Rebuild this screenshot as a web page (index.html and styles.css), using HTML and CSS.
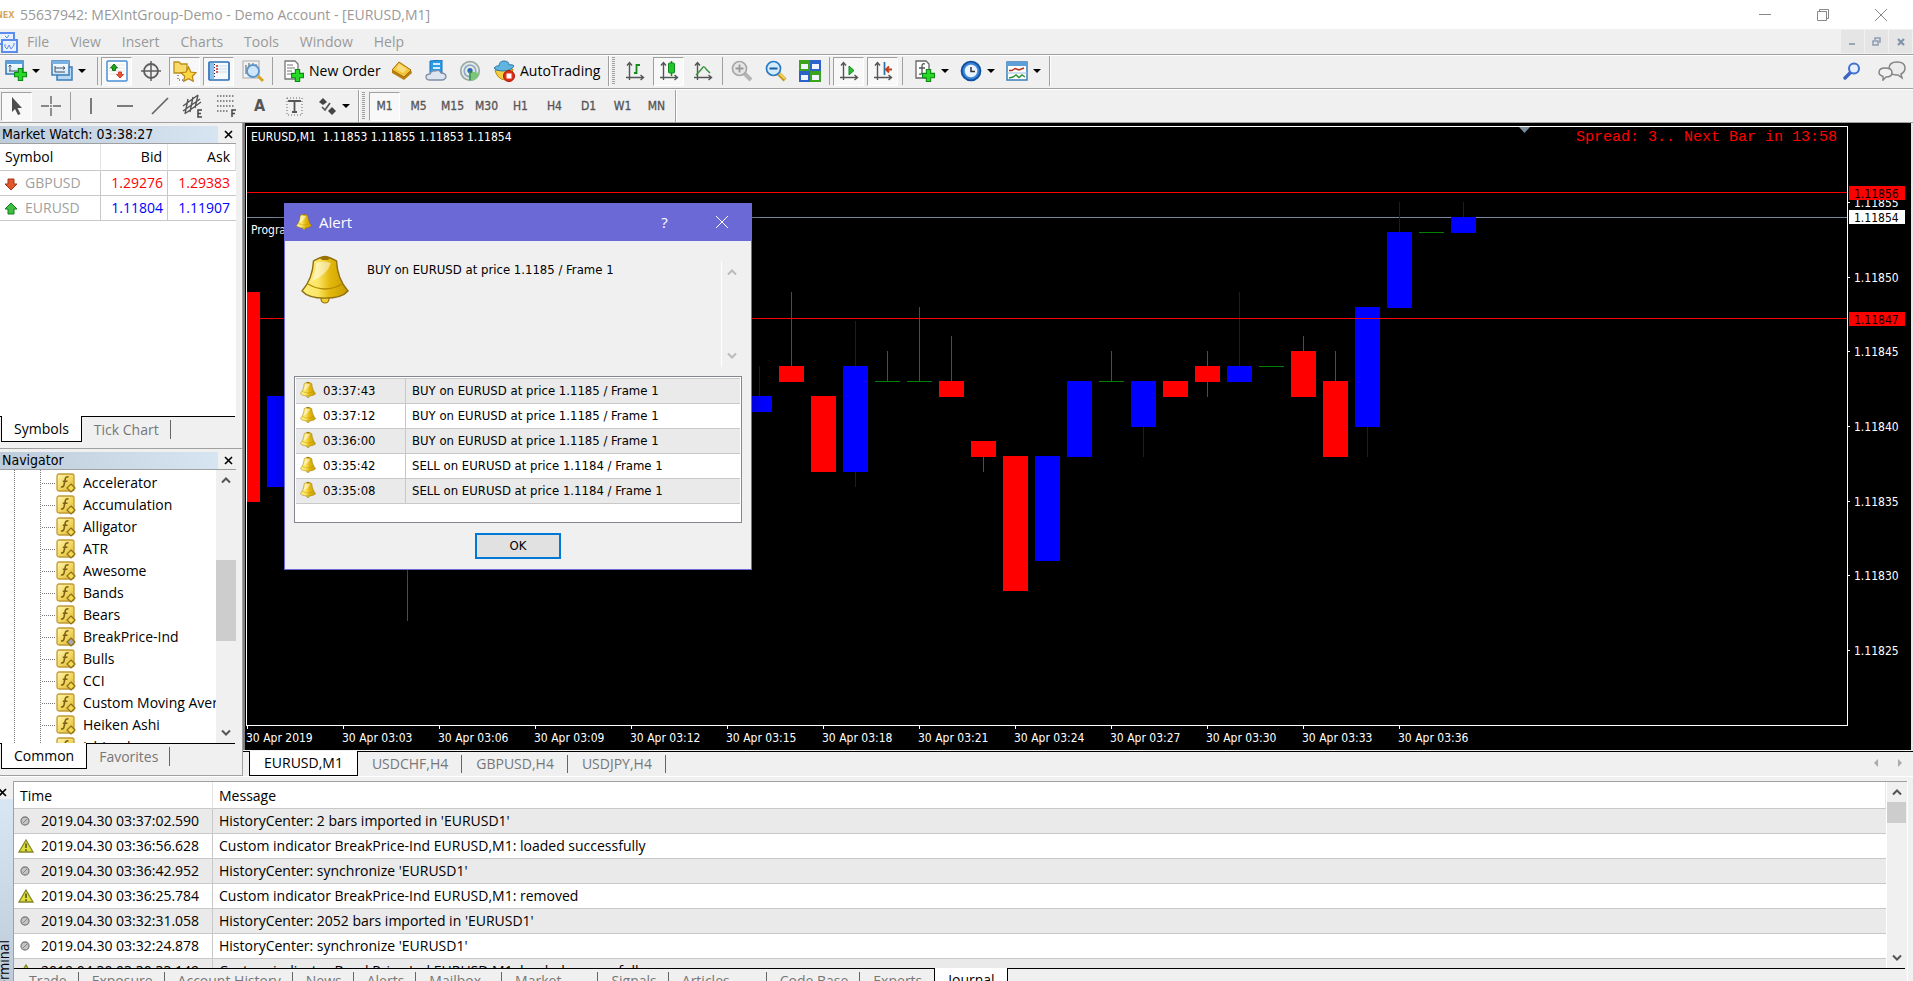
FILE: index.html
```html
<!DOCTYPE html>
<html lang="en">
<head>
<meta charset="utf-8">
<title>55637942: MEXIntGroup-Demo - Demo Account - [EURUSD,M1]</title>
<link rel="stylesheet" href="styles.css">
</head>
<body>
<svg class="defs" aria-hidden="true">
  <defs>
    <linearGradient id="gold" x1="0" y1="0" x2="1" y2="0">
      <stop offset="0" stop-color="#fff07a"/><stop offset=".35" stop-color="#fbe566"/><stop offset=".6" stop-color="#e3b90c"/><stop offset="1" stop-color="#c89b00"/>
    </linearGradient>
    <linearGradient id="fxfill" x1="0" y1="0" x2="1" y2="1">
      <stop offset="0" stop-color="#fff5b0"/><stop offset=".5" stop-color="#f3d964"/><stop offset="1" stop-color="#dcb52f"/>
    </linearGradient>
    <linearGradient id="bluewin" x1="0" y1="0" x2="0" y2="1">
      <stop offset="0" stop-color="#fff"/><stop offset="1" stop-color="#cfe4f7"/>
    </linearGradient>
    <radialGradient id="clockblue"><stop offset="0" stop-color="#cfe9ff"/><stop offset="1" stop-color="#1668c8"/></radialGradient>
  </defs>
  <symbol id="bell" viewBox="0 0 48 50">
    <circle cx="24" cy="44" r="4" fill="#f0cf30" stroke="#8f6f10" stroke-width="1.2"/>
    <path d="M24 1.5C19 2 16 4 12.500 6C12 17 8 28 1 36C9 45.500 39 45.500 47 36C40 28 36 17 35.500 6C32 4 29 2 24 1.500Z" fill="url(#gold)" stroke="#8f6f10" stroke-width="1.4"/>
    <path d="M19 3Q24 -1 29 3L27 5H21Z" fill="#9a7200"/>
    <path d="M7 29Q24 39 41 29" fill="none" stroke="#b48a00" stroke-width="1.3"/>
    <path d="M15 8Q22 5 30 8Q26 20 11 26Q15 16 15 8Z" fill="#fff" opacity=".5"/>
  </symbol>
  <symbol id="fx" viewBox="0 0 20 20">
    <rect x="1" y="1" width="17" height="17" rx="2" fill="url(#fxfill)" stroke="#c09a34" stroke-width="1.3"/>
    <path d="M12.500 4Q9.800 3.200 9.200 6.200L8 12Q7.300 14.500 5 13.800M6.800 8.200H11.500" fill="none" stroke="#7d6018" stroke-width="1.600"/>
    <path class="fx-mark" d="M15 11L19 15L15 19L11 15Z" stroke-width="1.200"/>
  </symbol>
  <symbol id="plus" viewBox="0 0 12 12"><path d="M4 .5H8V4H11.500V8H8V11.500H4V8H.5V4H4Z" fill="#27d827" stroke="#0a8a12"/></symbol>
  <symbol id="axes" viewBox="0 0 22 22"><path d="M5.500 20V3M3 5.500L5.500 2.500L8 5.500M2 17.500H19M16.500 15L19.500 17.500L16.500 20" fill="none" stroke="#555" stroke-width="1.400"/></symbol>
  <symbol id="up" viewBox="0 0 10 8"><path d="M1 6.500L5 2.500L9 6.500" fill="none" stroke="currentColor" stroke-width="2"/></symbol>
  <symbol id="down" viewBox="0 0 10 8"><path d="M1 1.500L5 5.500L9 1.500" fill="none" stroke="currentColor" stroke-width="2"/></symbol>
  <symbol id="x" viewBox="0 0 9 9"><path d="M1 1L8 8M8 1L1 8" stroke="currentColor" stroke-width="1.600"/></symbol>
  <symbol id="warn" viewBox="0 0 16 14"><path d="M8 1L15 13H1Z" fill="#dede38" stroke="#85852a" stroke-width="1.300"/><path d="M8 4.500V9M8 10.200V12" stroke="#555520" stroke-width="1.600"/></symbol>
  <symbol id="info" viewBox="0 0 16 14"><circle cx="7" cy="7" r="4" fill="#c4c4c4" stroke="#808080" stroke-width="1.300"/><path d="M5 9L9 5" stroke="#888"/></symbol>
</svg>

<header class="titlebar">
  <span class="brand">NEX</span>
  <h1>55637942: MEXIntGroup-Demo - Demo Account - [EURUSD,M1]</h1>
  <div class="winbtns">
    <button aria-label="Minimize"><svg width="12" height="12"><path d="M0 5.500H12" stroke="#888"/></svg></button>
    <button aria-label="Restore"><svg width="12" height="12"><path d="M.5 2.500H9.500V11.500H.5ZM2.500 2.500V.5H11.500V9.500H9.500" fill="none" stroke="#888"/></svg></button>
    <button aria-label="Close"><svg width="12" height="12"><path d="M0 0L12 12M12 0L0 12" stroke="#888"/></svg></button>
  </div>
</header>

<nav class="menubar">
  <svg class="appicon" width="18" height="21"><rect x="-3" y="1" width="17" height="11" fill="#e8f1fc" stroke="#5b8def" stroke-width="2"/><rect x="2" y="8" width="15" height="12" fill="#e8f1fc" stroke="#5b8def" stroke-width="2"/><path d="M5 12V15L7 17L9 13L11 17L14 13V11M5 4L7 6L9 3" fill="none" stroke="#5b8def"/></svg>
  <button>File</button><button>View</button><button>Insert</button><button>Charts</button><button>Tools</button><button>Window</button><button>Help</button>
  <div class="mdibtns">
    <button aria-label="Minimize chart"><svg width="7" height="9"><rect y="6" width="6" height="2" fill="#9aa6b4"/></svg></button>
    <button aria-label="Restore chart"><svg width="9" height="9"><path d="M1 4H6V8H1ZM3 3V1H8V5H7" fill="none" stroke="#8d9cae" stroke-width="1.500"/></svg></button>
    <button aria-label="Close chart"><svg width="8" height="8"><path d="M1 1L7 7M7 1L1 7" stroke="#8193a8" stroke-width="2.200"/></svg></button>
  </div>
</nav>

<div class="toolbar">
  <div class="group group--first">
    <button class="drop" aria-label="New chart"><svg width="22" height="22"><rect x="1" y="1" width="17" height="13" fill="url(#bluewin)" stroke="#2f78b8" stroke-width="1.500"/><rect x="1" y="1" width="17" height="3" fill="#5aa0dc"/><path d="M5 5V11M3.500 6.500L5 5L6.500 6.500M4 11H14" stroke="#456" fill="none"/><use href="#plus" x="9" y="8" width="13" height="13"/></svg><i class="caret"></i></button>
    <button class="drop" aria-label="Profiles"><svg width="22" height="22"><rect x="6" y="7" width="15" height="13" fill="#b8d7f2" stroke="#3a7db8" stroke-width="1.500"/><rect x="1" y="1" width="17" height="14" fill="url(#bluewin)" stroke="#3a7db8" stroke-width="1.500"/><rect x="1" y="1" width="17" height="3" fill="#78b1e2"/><path d="M4 6V12M4 8H14M12 6.500L14 8L12 9.500M4 12H14" stroke="#456" fill="none"/></svg><i class="caret"></i></button>
  </div>
  <i class="sep"></i>
  <button class="tool on" aria-label="Market Watch"><svg width="22" height="22"><rect x="1" y="1" width="20" height="20" rx="1" fill="#fff" stroke="#4a90d6" stroke-width="1.500"/><path d="M3 5H19M3 8H19M3 11H19M3 14H19" stroke="#e3e3e3"/><path d="M8 4L11.500 8H9.500V10.500H6.500V8H4.500Z" fill="#1fa51f" stroke="#0a7a12"/><path d="M14 18L10.500 14.500H12.500V12H15.500V14.500H17.500Z" fill="#ee5526" stroke="#c43" /></svg></button>
  <button class="tool" aria-label="Data Window"><svg width="22" height="22"><circle cx="11" cy="11" r="7" fill="none" stroke="#5d5d5d" stroke-width="1.800"/><path d="M11 1V21M1 11H21" stroke="#5d5d5d" stroke-width="1.500"/></svg></button>
  <button class="tool on" aria-label="Navigator"><svg width="24" height="22"><path d="M1 13V2H6L8 4H14V13Z" fill="#f7db6b" stroke="#b98f1b" stroke-width="1.300"/><path d="M5 15V21M6 20H10" stroke="#333" stroke-dasharray="1 2"/><path d="M15.500 7L17.800 12L23 12.700L19.300 16.200L20.300 21.300L15.500 18.800L10.700 21.300L11.700 16.200L8 12.700L13.200 12Z" fill="#fbd83f" stroke="#b98416" stroke-width="1.200"/></svg></button>
  <button class="tool on" aria-label="Terminal"><svg width="22" height="22"><rect x="1" y="2" width="20" height="18" rx="1" fill="#f5faff" stroke="#2d6fb5" stroke-width="1.700"/><rect x="2" y="3" width="4" height="16" fill="#8fc0ec"/><path d="M9 6H19M9 9H19M9 12H19" stroke="#cfdce8"/><path d="M8 6H10M8 9H10M8 12H10" stroke="#d22" stroke-width="1.300"/><path d="M6.500 4V18" stroke="#123" stroke-dasharray="1 2"/></svg></button>
  <button class="tool" aria-label="Strategy Tester"><svg width="24" height="24"><rect x="2" y="2" width="16" height="17" fill="#f2f2f2" stroke="#aaa"/><path d="M5 15V6M8 12V4M12 8V4M15 10V5" stroke="#888" stroke-width="1.500"/><circle cx="12" cy="12" r="6" fill="#cfe6f9" stroke="#5b95cd" stroke-width="1.800"/><path d="M17 17L22 22" stroke="#d9a520" stroke-width="3"/></svg></button>
  <i class="sep"></i>
  <button class="textbtn textbtn--order"><svg width="22" height="24"><path d="M2 2H12L15 5V20H2Z" fill="#fff" stroke="#777" stroke-width="1.300"/><path d="M4 6H10M4 9H12M4 12H9M4 15H9" stroke="#777"/><use href="#plus" x="8" y="10" width="13" height="13"/></svg>New Order</button>
  <button class="tool" aria-label="MetaEditor"><svg width="22" height="22"><path d="M8 2L20 10L21 13L13 20L1 13V10Z" fill="#b97f10"/><path d="M8 2L20 10L13 17L1 10Z" fill="#f3c53c" stroke="#a8700c"/><path d="M8 4L16 9L12 13L5 9Z" fill="#f9dd7c"/></svg></button>
  <button class="tool" aria-label="VPS"><svg width="22" height="22"><path d="M5 1L17 0V13H5Z" fill="#2e9be8" stroke="#1273bd"/><path d="M8 3H15V5H8ZM8 7H15V9H8Z" fill="#d5eeff"/><path d="M5 20Q1 20 1 17Q1 14 5 14Q6 10 10.500 11Q14 9 16 13Q21 13 21 17Q20 20 17 20Z" fill="#dce5f0" stroke="#7e8ea5" stroke-width="1.300"/></svg></button>
  <button class="tool" aria-label="Signals"><svg width="22" height="22"><circle cx="11" cy="11" r="9.300" fill="#e4ebe4" stroke="#9aaaa2" stroke-width="1.700"/><circle cx="11" cy="11" r="5.800" fill="none" stroke="#8fa9c8" stroke-width="1.700"/><path d="M11 11L20 13A9 9 0 0 1 12 21Z" fill="#7cc67c"/><circle cx="11" cy="10.500" r="2.600" fill="#2d66b8"/><path d="M11 11V20" stroke="#3b9648" stroke-width="1.700"/></svg></button>
  <button class="textbtn textbtn--auto"><svg width="22" height="22"><path d="M2 10Q4 19 12 20Q19 18 20 9Z" fill="#f5ce3f" stroke="#b8860b"/><path d="M1 8Q4 5 6 6Q6 1 11 1Q16 1 16 5Q20 4 21 6Q18 11 9 11Q3 11 1 8Z" fill="#5fb4e0" stroke="#2a7caa"/><circle cx="16" cy="16" r="5.500" fill="#e02d1b" stroke="#a81508"/><rect x="13.500" y="13.500" width="5" height="5" fill="#fff"/></svg>AutoTrading</button>
  <i class="end"></i><i class="grip"></i>
  <button class="tool" aria-label="Bar Chart"><svg width="22" height="22"><use href="#axes"/><path d="M12.500 4V14M12.500 5H16M10 13H12.500" stroke="#148a1c" stroke-width="1.800"/></svg></button>
  <button class="tool on" aria-label="Candlesticks"><svg width="22" height="22"><use href="#axes"/><path d="M13.500 1V16" stroke="#148a1c" stroke-width="1.500"/><rect x="10.500" y="3" width="6" height="10" rx="1" fill="#22c52c" stroke="#148a1c"/></svg></button>
  <button class="tool" aria-label="Line Chart"><svg width="22" height="22"><use href="#axes"/><path d="M4 15Q8 11 10 8.500Q12 5 14 9L18 13" fill="none" stroke="#3a9440" stroke-width="1.500"/></svg></button>
  <i class="sep"></i>
  <button class="tool" aria-label="Zoom In"><svg width="22" height="22"><path d="M13 13L20 20" stroke="#b5b5b5" stroke-width="4"/><circle cx="8.500" cy="8.500" r="7" fill="#e6e6e6" stroke="#a8a8a8" stroke-width="1.700"/><path d="M4.500 8.500H12.500M8.500 4.500V12.500" stroke="#999" stroke-width="1.800"/></svg></button>
  <button class="tool" aria-label="Zoom Out"><svg width="22" height="22"><path d="M13 13L20 20" stroke="#c99a20" stroke-width="4"/><path d="M14 13L20 19" stroke="#f7dc66" stroke-width="1.500"/><circle cx="8.500" cy="8.500" r="7" fill="#d3ebfc" stroke="#2a7bc4" stroke-width="1.700"/><path d="M4.500 8.500H12.500" stroke="#1b5c9e" stroke-width="2"/></svg></button>
  <button class="tool" aria-label="Tile Windows"><svg width="22" height="22"><path d="M0 0H11V11H0ZM11 11H22V22H11Z" fill="#3ba41c"/><path d="M11 0H22V11H11ZM0 11H11V22H0Z" fill="#2c62c9"/><path d="M2 4H9V9H2ZM13 4H20V9H13ZM2 15H9V20H2ZM13 15H20V20H13Z" fill="#eef5ff"/></svg></button>
  <i class="sep"></i>
  <button class="tool on" aria-label="Auto Scroll"><svg width="22" height="22"><use href="#axes"/><path d="M11 6L16 10.500L11 15Z" fill="#2bc032" stroke="#138a1c"/></svg></button>
  <button class="tool on" aria-label="Chart Shift"><svg width="22" height="22"><use href="#axes"/><path d="M12.500 2V15" stroke="#2a6ea8" stroke-width="1.700"/><path d="M20 9.500H14M17 6.500L14 9.500L17 12.500" fill="none" stroke="#c43a14" stroke-width="1.800"/></svg></button>
  <i class="sep"></i>
  <div class="group group--menus">
    <button class="drop" aria-label="Indicators"><svg width="22" height="24"><path d="M2 2H12L15 5V19H2Z" fill="#fff" stroke="#666" stroke-width="1.300"/><path d="M11 5Q8 4 8 7V13Q8 16 5 15M5 9H11" stroke="#555" fill="none" stroke-width="1.300"/><use href="#plus" x="8" y="10" width="13" height="13"/></svg><i class="caret"></i></button>
    <button class="drop" aria-label="Periods"><svg width="22" height="22"><circle cx="11" cy="11" r="9.500" fill="url(#clockblue)" stroke="#0e4f9e" stroke-width="1.700"/><circle cx="11" cy="11" r="6.200" fill="#e9f5ff"/><path d="M11 7V11.500H15" fill="none" stroke="#333" stroke-width="1.500"/></svg><i class="caret"></i></button>
    <button class="drop" aria-label="Templates"><svg width="22" height="22"><rect x="1" y="2" width="20" height="18" fill="#fff" stroke="#3a7db8" stroke-width="1.500"/><rect x="1" y="2" width="20" height="4" fill="#5f9fd8"/><path d="M3 10.500H6L9 8.500L13 10L18 8" fill="none" stroke="#b5301c" stroke-width="1.500"/><path d="M1 13H21" stroke="#9cc0e0"/><path d="M3 18L7 17L10 15L13 17.500L16 15L19 17" fill="none" stroke="#2c9436" stroke-width="1.500"/></svg><i class="caret"></i></button>
  </div>
  <i class="end"></i>
  <div class="toolbar-right">
    <button aria-label="Search"><svg width="18" height="18"><path d="M8 10L2 16" stroke="#3a63c4" stroke-width="3.400" stroke-linecap="round"/><circle cx="11" cy="6.500" r="5" fill="#e8effc" stroke="#3f6fd1" stroke-width="2"/></svg></button>
    <button aria-label="Chat"><svg width="28" height="20"><path d="M19 14Q11 14 11 7.500Q11 1 19 1Q27 1 27 7Q27 11 23 13L24 17L20 14Z" fill="#ececec" stroke="#858585" stroke-width="1.500"/><path d="M7 7Q14 7 14 11.500Q14 16 8 16L5 19V15.500Q1 14 1 11.500Q1 7 7 7Z" fill="#f1f1f1" stroke="#858585" stroke-width="1.500"/></svg></button>
  </div>
</div>

<div class="toolbar toolbar--draw">
  <button class="tool on" aria-label="Cursor"><svg width="22" height="22"><path d="M6 2V17L9 14L12 20L14.500 19L11.500 13H16Z" fill="#4d4d4d"/></svg></button>
  <button class="tool" aria-label="Crosshair"><svg width="22" height="22"><path d="M11 1V9M11 13V21M1 11H9M13 11H21M11 10V12" stroke="#666" stroke-width="1.400"/></svg></button>
  <i class="sep"></i>
  <button class="tool" aria-label="Vertical Line"><svg width="22" height="22"><path d="M12 3V19" stroke="#666" stroke-width="1.700"/></svg></button>
  <button class="tool" aria-label="Horizontal Line"><svg width="22" height="22"><path d="M4 11H20" stroke="#666" stroke-width="1.700"/></svg></button>
  <button class="tool" aria-label="Trendline"><svg width="22" height="22"><path d="M5 19L21 3" stroke="#666" stroke-width="1.700"/></svg></button>
  <button class="tool" aria-label="Equidistant Channel"><svg width="22" height="24"><path d="M2 12L17 1M2 17L19 5M5 19L20 8M7 5L4 20M12 3L9 18M17 1L14 14" stroke="#555" stroke-width="1.400"/><path d="M21 16H17V23H21M17 19.500H20" fill="none" stroke="#444" stroke-width="1.500"/></svg></button>
  <button class="tool" aria-label="Fibonacci Retracement"><svg width="22" height="24"><path d="M2 2H20M2 7H20M2 12H20M2 17H14" stroke="#666" stroke-width="1.500" stroke-dasharray="1.500 1.500"/><path d="M17 23V16H21M17 19.500H20" fill="none" stroke="#444" stroke-width="1.500"/></svg></button>
  <button class="tool glyph" aria-label="Text">A</button>
  <button class="tool" aria-label="Text Label"><svg width="22" height="22"><rect x="4" y="3" width="15" height="17" fill="none" stroke="#666" stroke-dasharray="1 2"/><path d="M6 7V6H17V7M11.500 6V17M9 17H14" stroke="#555" stroke-width="1.800" fill="none"/></svg></button>
  <button class="drop" aria-label="Arrows"><svg width="22" height="22"><path d="M8 3L12 7L8 10L4 7ZM17 12L21 16L17 20L13 16Z" fill="#444"/><path d="M7 12L10 15L15 8" fill="none" stroke="#555" stroke-width="1.700"/></svg><i class="caret"></i></button>
  <i class="end"></i><i class="grip"></i>
  <button class="tool tf on">M1</button><button class="tool tf">M5</button><button class="tool tf">M15</button><button class="tool tf">M30</button><button class="tool tf">H1</button><button class="tool tf">H4</button><button class="tool tf">D1</button><button class="tool tf">W1</button><button class="tool tf">MN</button>
  <i class="end"></i>
</div>

<main class="workspace">
  <aside class="side">
    <section class="panel panel--watch">
      <header class="panel-head"><h2>Market Watch: 03:38:27</h2><button aria-label="Close Market Watch"><svg width="9" height="9"><use href="#x"/></svg></button></header>
      <div class="panel-body">
        <table class="quotes">
          <colgroup><col class="c-symbol"><col class="c-bid"><col></colgroup>
          <thead><tr><th>Symbol</th><th>Bid</th><th>Ask</th></tr></thead>
          <tbody>
            <tr class="fall"><td><svg width="14" height="14"><path d="M7 13L1 7H4V2H10V7H13Z" fill="#e0572a" stroke="#a33415"/></svg>GBPUSD</td><td>1.29276</td><td>1.29383</td></tr>
            <tr class="rise"><td><svg width="14" height="14"><path d="M7 1L13 7H10V12H4V7H1Z" fill="#3fbf3f" stroke="#157a20"/></svg>EURUSD</td><td>1.11804</td><td>1.11907</td></tr>
          </tbody>
        </table>
      </div>
      <div class="tabs"><button class="tab active">Symbols</button><button class="tab">Tick Chart</button></div>
    </section>
    <section class="panel panel--nav">
      <header class="panel-head"><h2>Navigator</h2><button aria-label="Close Navigator"><svg width="9" height="9"><use href="#x"/></svg></button></header>
      <div class="panel-body tree-box">
        <ul class="tree">
          <li><svg><use href="#fx"/></svg>Accelerator</li>
          <li><svg><use href="#fx"/></svg>Accumulation</li>
          <li><svg><use href="#fx"/></svg>Alligator</li>
          <li><svg><use href="#fx"/></svg>ATR</li>
          <li><svg><use href="#fx"/></svg>Awesome</li>
          <li><svg><use href="#fx"/></svg>Bands</li>
          <li><svg><use href="#fx"/></svg>Bears</li>
          <li class="custom"><svg><use href="#fx"/></svg>BreakPrice-Ind</li>
          <li><svg><use href="#fx"/></svg>Bulls</li>
          <li><svg><use href="#fx"/></svg>CCI</li>
          <li><svg><use href="#fx"/></svg>Custom Moving Average</li>
          <li><svg><use href="#fx"/></svg>Heiken Ashi</li>
          <li><svg><use href="#fx"/></svg>Ichimoku</li>
        </ul>
        <div class="scroll scroll--nav"><button aria-label="Scroll up"><svg width="10" height="8"><use href="#up"/></svg></button><i class="track-a"></i><i class="thumb"></i><i class="track-b"></i><button aria-label="Scroll down"><svg width="10" height="8"><use href="#down"/></svg></button></div>
      </div>
      <div class="tabs"><button class="tab active">Common</button><button class="tab">Favorites</button></div>
    </section>
  </aside>

  <section class="charts">
    <div class="chart">
      <div class="plot">
        <svg class="plot-svg" id="plot" width="100%" height="100%"></svg>
        <p class="ohlc">EURUSD,M1&nbsp; 1.11853 1.11855 1.11853 1.11854</p>
        <p class="note">Program</p>
        <p class="spread">Spread: 3.. Next Bar in 13:58</p>
      </div>
      <svg class="prices" id="prices" width="63" height="100%"></svg>
      <ol class="times"><li>30 Apr 2019</li><li>30 Apr 03:03</li><li>30 Apr 03:06</li><li>30 Apr 03:09</li><li>30 Apr 03:12</li><li>30 Apr 03:15</li><li>30 Apr 03:18</li><li>30 Apr 03:21</li><li>30 Apr 03:24</li><li>30 Apr 03:27</li><li>30 Apr 03:30</li><li>30 Apr 03:33</li><li>30 Apr 03:36</li></ol>
    </div>
    <div class="tabs tabs--charts"><button class="tab active">EURUSD,M1</button><button class="tab">USDCHF,H4</button><button class="tab">GBPUSD,H4</button><button class="tab">USDJPY,H4</button>
      <span class="tabnav"><svg width="6" height="10"><path d="M5 1V9L1 5Z" fill="#aaa"/></svg><svg width="6" height="10"><path d="M1 1V9L5 5Z" fill="#aaa"/></svg></span>
    </div>
  </section>
</main>

<section class="terminal">
  <div class="spine"><button aria-label="Close Terminal"><svg width="9" height="9"><use href="#x"/></svg></button><h2><span>Terminal</span></h2></div>
  <div class="terminal-main">
    <div class="journal-box">
      <div class="journal-clip">
      <table class="journal">
        <colgroup><col class="c-time"><col></colgroup>
        <thead><tr><th>Time</th><th>Message</th></tr></thead>
        <tbody>
          <tr><td><svg><use href="#info"/></svg>2019.04.30 03:37:02.590</td><td>HistoryCenter: 2 bars imported in 'EURUSD1'</td></tr>
          <tr><td><svg><use href="#warn"/></svg>2019.04.30 03:36:56.628</td><td>Custom indicator BreakPrice-Ind EURUSD,M1: loaded successfully</td></tr>
          <tr><td><svg><use href="#info"/></svg>2019.04.30 03:36:42.952</td><td>HistoryCenter: synchronize 'EURUSD1'</td></tr>
          <tr><td><svg><use href="#warn"/></svg>2019.04.30 03:36:25.784</td><td>Custom indicator BreakPrice-Ind EURUSD,M1: removed</td></tr>
          <tr><td><svg><use href="#info"/></svg>2019.04.30 03:32:31.058</td><td>HistoryCenter: 2052 bars imported in 'EURUSD1'</td></tr>
          <tr><td><svg><use href="#info"/></svg>2019.04.30 03:32:24.878</td><td>HistoryCenter: synchronize 'EURUSD1'</td></tr>
          <tr><td><svg><use href="#warn"/></svg>2019.04.30 03:30:33.149</td><td>Custom indicator BreakPrice-Ind EURUSD,M1: loaded successfully</td></tr>
        </tbody>
      </table>
      </div>
      <div class="scroll scroll--journal"><button aria-label="Scroll up"><svg width="10" height="8"><use href="#up"/></svg></button><i class="thumb"></i><i class="track-b"></i><button aria-label="Scroll down"><svg width="10" height="8"><use href="#down"/></svg></button></div>
    </div>
    <div class="tabs tabs--terminal"><button class="tab">Trade</button><button class="tab">Exposure</button><button class="tab">Account History</button><button class="tab">News</button><button class="tab">Alerts</button><button class="tab tab--count">Mailbox</button><button class="tab tab--wide">Market</button><button class="tab">Signals</button><button class="tab tab--wide">Articles</button><button class="tab">Code Base</button><button class="tab tab--last">Experts</button><button class="tab active">Journal</button></div>
  </div>
</section>

<div class="alert" role="dialog" aria-labelledby="alert-title">
  <header class="alert-head"><svg width="16" height="18"><use href="#bell"/></svg><h2 id="alert-title">Alert</h2>
    <button aria-label="Help">?</button><button aria-label="Close"><svg width="12" height="12"><path d="M0 0L12 12M12 0L0 12" stroke="#fff"/></svg></button></header>
  <div class="alert-body">
    <div class="alert-top">
      <svg width="48" height="50"><use href="#bell"/></svg>
      <p>BUY on EURUSD at price 1.1185 / Frame 1</p>
      <div class="alert-scroll"><svg width="10" height="8"><use href="#up"/></svg><svg width="10" height="8"><use href="#down"/></svg></div>
    </div>
    <div class="alert-list">
      <table>
        <colgroup><col class="c-when"><col></colgroup>
        <tbody>
        <tr><td><svg><use href="#bell"/></svg>03:37:43</td><td>BUY on EURUSD at price 1.1185 / Frame 1</td></tr>
        <tr><td><svg><use href="#bell"/></svg>03:37:12</td><td>BUY on EURUSD at price 1.1185 / Frame 1</td></tr>
        <tr><td><svg><use href="#bell"/></svg>03:36:00</td><td>BUY on EURUSD at price 1.1185 / Frame 1</td></tr>
        <tr><td><svg><use href="#bell"/></svg>03:35:42</td><td>SELL on EURUSD at price 1.1184 / Frame 1</td></tr>
        <tr><td><svg><use href="#bell"/></svg>03:35:08</td><td>SELL on EURUSD at price 1.1184 / Frame 1</td></tr>
        </tbody>
      </table>
    </div>
    <button class="ok">OK</button>
  </div>
</div>
<script src="chart.js"></script>
</body>
</html>
```

FILE: styles.css
```css
:root {
  --ui: "Open Sans", "Noto Sans", sans-serif;
  --small: "DejaVu Sans Condensed", "DejaVu Sans", sans-serif;
  --face: #f0f0f0;
  --line: #a0a0a0;
  --grid: #c8c8c8;
}
* { box-sizing: border-box; }
html, body { height: 100%; }
body {
  margin: 0;
  display: flex;
  flex-direction: column;
  overflow: hidden;
  background: var(--face);
  font: 14px/18px var(--ui);
  color: #000;
}
h1, h2, p, ul, ol { margin: 0; padding: 0; font: inherit; list-style: none; }
button { font: inherit; color: inherit; background: none; border: 0; padding: 0; border-radius: 0; }
svg { display: block; flex: none; }
.defs { position: absolute; width: 0; height: 0; }
table { border-collapse: separate; border-spacing: 0; table-layout: fixed; width: 100%; }
th { font-weight: normal; text-align: left; }
td, th { padding: 0; white-space: nowrap; }
td svg { display: inline-block; vertical-align: middle; }

/* title and menu */
.titlebar { display: flex; align-items: center; height: 29px; background: #fff; color: #999; flex: none; }
.brand { width: 20px; margin-left: -4px; margin-right: 4px; font: bold 9px/12px var(--small); color: #d9a860; }
.winbtns { margin-left: auto; display: flex; padding-right: 3px; }
.winbtns button { width: 58px; display: flex; justify-content: center; }
.menubar { display: flex; align-items: center; height: 27px; flex: none; color: #999; border-bottom: 1px solid #fff; box-shadow: inset 0 -1px var(--line); }
.appicon { margin-right: -1px; }
.menubar > button { padding: 0 10px; margin-right: 1px; }
.mdibtns { margin-left: auto; display: flex; gap: 1px; padding-right: 1px; height: 23px; margin-bottom: 1px; }
.mdibtns button { width: 23px; background: #e5e5e5; display: flex; align-items: center; justify-content: center; }

/* toolbars */
.toolbar { display: flex; align-items: center; height: 34px; flex: none; padding: 0 0 3px 2px; border-bottom: 1px solid #fff; box-shadow: inset 0 -1px var(--line); }
.toolbar--draw { height: 33px; padding: 0 0 1px 1px; border-bottom: 0; }
.group { display: flex; }
.group--first { padding-right: 2px; }
.group--menus { padding-left: 5px; }
.tool { width: 31px; height: 29px; margin-right: 3px; display: flex; align-items: center; justify-content: center; border: 1px solid transparent; flex: none; }
.tool.on { background: #f8f8f8; border-color: var(--line) #fff #fff var(--line); }
.tf { font: 12px/16px var(--small); color: #555; -webkit-text-stroke: 0.3px #555; }
.glyph { font: bold 16px/20px var(--small); color: #555; }
.drop { width: 46px; height: 29px; padding-left: 3px; display: flex; align-items: center; gap: 5px; flex: none; }
.caret { border: 4px solid transparent; border-top-color: #000; border-bottom: 0; }
.sep { width: 1px; height: 28px; background: var(--line); margin: 0 3px 0 1px; flex: none; }
.end { width: 2px; align-self: stretch; background: linear-gradient(90deg, var(--line) 50%, #fff 50%); flex: none; }
.grip { width: 3px; height: 28px; margin: 0 4px 0 2px; background: repeating-linear-gradient(var(--line) 0 1px, transparent 1px 2px); flex: none; }
.textbtn { display: flex; align-items: center; height: 29px; flex: none; }
.textbtn--order { width: 110px; padding-left: 7px; gap: 4px; }
.textbtn--auto { width: 120px; padding-left: 5px; gap: 5px; }
.toolbar-right { margin-left: auto; display: flex; align-items: center; gap: 17px; padding-right: 7px; }

/* workspace */
.workspace { flex: 1; min-height: 0; display: flex; }
.side { width: 243px; flex: none; display: grid; grid-template-columns: minmax(0, 1fr); grid-template-rows: 326px minmax(0, 1fr); border-right: 1px solid var(--line); }
.panel { min-height: 0; display: flex; flex-direction: column; padding: 3px 5px 6px 0; border-bottom: 1px solid var(--line); }
.panel-head { display: flex; height: 17px; align-items: center; font: 14px/17px var(--small); flex: none; }
.panel-head h2 { width: 218px; padding-left: 2px; background: linear-gradient(90deg, #bfcddb, #d7e4f2); }
.panel-head button { padding-left: 6px; }
.panel-body { flex: 1; min-height: 0; background: #fff; border-top: 1px solid var(--line); margin-right: 1px; }
.c-symbol { width: 101px; }
.c-bid { width: 67px; }
.quotes th { height: 27px; border-bottom: 1px solid var(--grid); border-right: 1px solid #e5e5e5; padding: 0 5px; }
.quotes td { height: 25px; border-bottom: 1px solid var(--grid); border-right: 1px solid var(--grid); padding: 0 4px; }
.quotes td:last-child { border-right: 0; padding-right: 6px; }
.quotes td + td, .quotes th + th { text-align: right; }
.quotes td:first-child { color: #a0a0a0; }
.quotes svg { margin-right: 7px; }
.fall { color: #f00; }
.rise { color: #00f; }

.tabs { display: flex; height: 26px; border-top: 1px solid #000; flex: none; margin-right: 2px; color: #777; padding-left: 1px; }
.tab { height: 100%; padding: 0 12px; position: relative; white-space: nowrap; flex: none; }
.tab:not(.active)::after { content: ""; position: absolute; right: 0; top: 3px; bottom: 3px; width: 1px; background: #666; }
.tab.active { color: #000; background: #fff; border: 1px solid #000; border-top: 0; margin-top: -1px; height: calc(100% + 1px); }

.tree-box { display: flex; }
.tree { flex: 1; min-width: 0; overflow: hidden; padding-top: 2px; background: repeating-linear-gradient(#777 0 1px, transparent 1px 2px) 14px 0 / 1px 100% no-repeat, repeating-linear-gradient(#777 0 1px, transparent 1px 2px) 40px 0 / 1px 100% no-repeat; }
.tree li { height: 22px; display: flex; align-items: center; padding-left: 42px; white-space: nowrap; }
.tree li::before { content: ""; width: 13px; height: 1px; margin-right: 1px; flex: none; background: repeating-linear-gradient(90deg, #777 0 1px, transparent 1px 2px); }
.tree svg { width: 20px; height: 20px; margin-right: 7px; --mark: #f5d94f; }
.fx-mark { fill: var(--mark); stroke: #8c6f1c; }
.tree .custom svg { --mark: #aaa; }
.scroll { width: 20px; background: var(--face); color: #555; display: flex; flex-direction: column; flex: none; }
.scroll button { height: 20px; display: flex; align-items: center; justify-content: center; flex: none; }
.thumb { background: #cdcdcd; }
.track-a { flex: 70; }
.scroll--nav .thumb { flex: 81; }
.scroll--nav .track-b { flex: 82; }
.scroll--journal .thumb { height: 21px; width: 19px; }
.scroll--journal .track-b { flex: 1; }

/* charts */
.charts { flex: 1; min-width: 0; display: flex; flex-direction: column; }
.chart { flex: 1; min-height: 0; display: grid; grid-template-columns: minmax(0, 1fr) 63px; grid-template-rows: minmax(0, 1fr) 24px; background: #000; color: #fff; border-left: 2px solid #808080; border-right: 2px solid #e8e8e8; padding: 3px 0 0 1px; font: 12px/14px var(--small); }
.plot { position: relative; border: 1px solid #fff; overflow: hidden; min-height: 0; }
.plot-svg { position: absolute; inset: 0; }
.ohlc { position: absolute; left: 4px; top: 3px; }
.note { position: absolute; left: 4px; top: 96px; }
.spread { position: absolute; right: 10px; top: 2px; color: #f00; font: 15px/18px "Liberation Mono", monospace; }
.prices { overflow: visible; min-height: 0; font: 12px var(--small); }
.times { grid-column: 1 / -1; display: flex; }
.times li { width: 96px; flex: none; padding-top: 5px; position: relative; }
.times li::before { content: ""; position: absolute; left: 1px; top: 0; width: 1px; height: 3px; background: #fff; }
.tabs--charts { height: 25px; margin: 1px 0 0; padding-left: 6px; flex: none; }
.tabs--charts .tab { padding: 0 14px; }
.tabnav { margin: 0 10px 0 auto; display: flex; gap: 18px; padding-top: 6px; }

/* terminal */
.terminal { height: 205px; flex: none; display: flex; padding: 4px 5px 0 0; border-top: 1px solid #fff; }
.spine { width: 13px; flex: none; overflow: hidden; display: flex; flex-direction: column; }
.spine button { height: 18px; flex: none; padding: 4px 0 0; margin-left: -2px; }
.spine h2 { flex: 1; display: flex; align-items: flex-start; padding-top: 141px; background: linear-gradient(#d9e6f4, #bccad8); font: 14px/17px var(--small); }
.spine span { writing-mode: vertical-rl; transform: rotate(180deg); margin-left: -4px; flex: none; }
.terminal-main { flex: 1; min-width: 0; border-left: 1px solid var(--line); border-right: 1px solid #fff; display: flex; flex-direction: column; }
.journal-box { flex: 1; min-height: 0; display: flex; border-top: 1px solid var(--line); background: #fff; }
.journal-clip { flex: 1; min-width: 0; overflow: hidden; margin-right: 1px; }
.c-time { width: 199px; }
.journal th { height: 27px; border-bottom: 1px solid var(--grid); border-right: 1px solid #e5e5e5; padding: 1px 6px 0; }
.journal td { height: 25px; border-bottom: 1px solid var(--grid); padding: 0 6px; }
.journal td:first-child { border-right: 1px solid var(--grid); padding-left: 4px; }
.journal tr:nth-child(odd) td { background: #eaeaea; }
.journal td svg { width: 16px; height: 14px; margin-right: 7px; margin-top: -3px; }
.tabs--terminal { height: 13px; margin-right: 2px; padding-left: 2px; }
.tabs--terminal .tab { height: 24px; padding: 0 12px 0 13px; }
.tabs--terminal .tab--count { padding-right: 21px; }
.tabs--terminal .tab--wide { padding-right: 37px; }
.tabs--terminal .tab--last::after { display: none; }

/* alert window */
.alert { position: absolute; left: 284px; top: 203px; width: 468px; border: 1px solid #6b69d6; background: var(--face); font: 13px/16px var(--small); box-shadow: 0 2px 14px rgba(0, 0, 0, .3); }
.alert-head { display: flex; align-items: center; height: 37px; padding: 0 1px 2px 11px; background: #6b69d6; color: #fff; font: 15px/20px var(--ui); }
.alert-head h2 { margin: 0 auto 0 7px; }
.alert-head button { width: 57px; display: flex; justify-content: center; }
.alert-body { display: flex; flex-direction: column; padding: 14px 9px 10px; }
.alert-top { display: flex; height: 121px; padding-left: 7px; }
.alert-top p { margin: 7px auto 0 18px; }
.alert-scroll { border-left: 1px solid #fff; margin: 6px 0 9px; width: 21px; padding: 7px 5px; color: #bbb; display: flex; flex-direction: column; justify-content: space-between; }
.alert-list { height: 147px; background: #fff; border: 1px solid #828790; padding: 1px; }
.c-when { width: 110px; }
.alert-list td { height: 25px; border-bottom: 1px solid var(--grid); padding: 0 6px; }
.alert-list tr:first-child td { height: 26px; border-top: 1px solid var(--grid); }
.alert-list td:first-child { border-right: 1px solid var(--grid); padding-left: 4px; }
.alert-list tr:nth-child(odd) td { background: #eaeaea; }
.alert-list svg { width: 16px; height: 18px; margin-right: 7px; margin-top: -2px; }
.ok { align-self: center; margin-top: 10px; width: 86px; height: 26px; background: #e1e1e1; border: 2px solid #0078d7; }
```

FILE: chart.js
```js
// Candles: [slot, open, high, low, close], in points above 1.11800
const candles = [
  [0, 49, 49, 35, 35], [1, 36, 42, 36, 42], [5, 36, 36, 27, 33], [16, 41, 44, 41, 42],
  [17, 44, 49, 43, 43], [18, 42, 42, 37, 37], [19, 37, 47, 36, 44], [20, 43, 45, 43, 43],
  [21, 43, 48, 43, 43], [22, 43, 46, 42, 42], [23, 39, 39, 37, 38], [24, 38, 38, 29, 29],
  [25, 31, 38, 31, 38], [26, 38, 43, 38, 43], [27, 43, 45, 43, 43], [28, 40, 43, 38, 43],
  [29, 43, 43, 42, 42], [30, 44, 45, 42, 43], [31, 43, 49, 43, 44], [32, 44, 44, 44, 44],
  [33, 45, 46, 42, 42], [34, 43, 45, 38, 38], [35, 40, 48, 38, 48], [36, 48, 55, 48, 53],
  [37, 53, 53, 53, 53], [38, 53, 55, 53, 54]
];
const step = 32, pointHeight = 14.93, base = 150.2;
const y = p => Math.floor(base + (50 - p) * pointHeight);
const rect = (x, top, w, h, fill) =>
  `<rect x="${x}" y="${top}" width="${w}" height="${h}" fill="${fill}"/>`;

let plot = rect(0, 90, '100%', 1, '#778899');
for (const [slot, open, high, low, close] of candles) {
  const color = open === close ? '#008000' : close > open ? '#0000ff' : '#ff0000';
  const top = y(Math.max(open, close)), bottom = y(Math.min(open, close));
  const x = slot * step;
  plot += rect(x, y(high), 1, y(low) - y(high) + 1, color);
  plot += rect(x - 12, top, 25, bottom - top + 1, color);
}
plot += rect(0, 65, '100%', 1, '#ff0000') + rect(0, 191, '100%', 1, '#ff0000');
plot += '<svg x="80%" overflow="visible"><path d="M-8 0H3L-2.500 6Z" fill="#778899"/></svg>';
document.getElementById('plot').innerHTML = plot;

let axis = '';
for (const p of [55, 50, 45, 40, 35, 30, 25]) {
  axis += rect(0, y(p) + 1, 2, 1, '#fff');
  axis += `<text x="6" y="${y(p) + 6}" fill="#fff">1.118${p}</text>`;
}
for (const [p, top, fill] of [[56, 60, '#ff0000'], [54, 84, '#ffffff'], [47, 186, '#ff0000']]) {
  axis += rect(1, top, 56, 14, fill);
  axis += `<text x="6" y="${top + 12}" fill="#000">1.118${p}</text>`;
}
document.getElementById('prices').innerHTML = axis;
```
